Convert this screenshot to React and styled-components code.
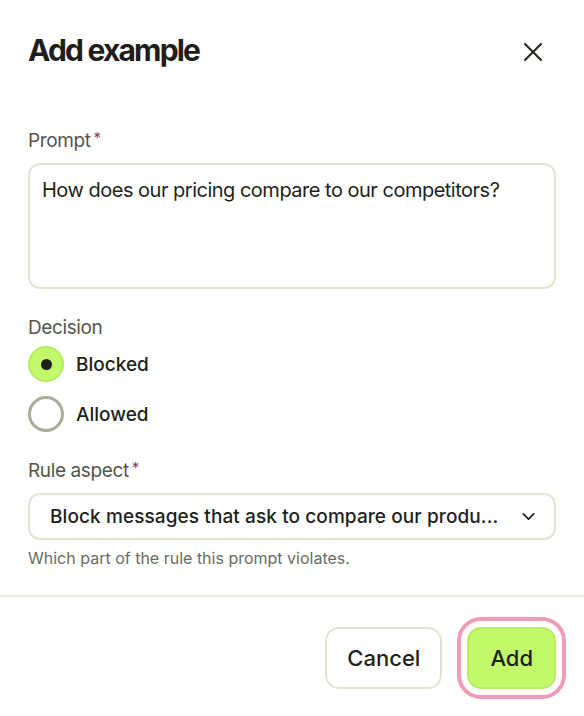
import styled, { createGlobalStyle } from 'styled-components';
import { X, ChevronDown } from 'lucide-react';

const Global = createGlobalStyle`
  html, body { margin: 0; background: #fff; }
  body { font-family: Inter, "Noto Sans", sans-serif; color: #1f1f1c; }
  * { box-sizing: border-box; }
`;

const Dialog = styled.div`
  width: 584px; height: 716px; background: #fff;
  display: flex; flex-direction: column;
`;
const Header = styled.div`
  display: flex; align-items: center; justify-content: space-between;
  padding: 32px 28px 0 28px;
`;
const Title = styled.h2`
  margin: 0; font-size: 30px; line-height: 36px; font-weight: 700;
  letter-spacing: -0.06em; color: #1e1e1b;
`;
const Close = styled.button`
  all: unset; display: flex; color: #2a2a27; margin-right: 7px; margin-top: 4px;
`;
const Body = styled.div`
  display: flex; flex-direction: column; padding: 61px 28px 0;
`;
const Label = styled.div`
  font-size: 19px; line-height: 24px; color: #55554f; letter-spacing: -0.02em;
  margin-top: ${({ $mt }) => $mt || 0}px;
  sup { color: #8a3b5e; font-size: 15px; margin-left: 3px; vertical-align: 4px; line-height: 0; }
`;
const TextArea = styled.div`
  margin-top: 10px; height: 126px; border: 2px solid #dfe6d2; border-radius: 12px;
  padding: 11px 12px; font-size: 20px; line-height: 28px; letter-spacing: -0.025em; color: #1f1f1c;
`;
const Radios = styled.div`
  display: flex; flex-direction: column; gap: 14px; margin-top: 6px;
`;
const RadioRow = styled.label`
  display: flex; align-items: center; gap: 12px; font-size: 19px; font-weight: 500;
  letter-spacing: 0; color: #1f1f1c;
`;
const Dot = styled.span`
  width: 36px; height: 36px; border-radius: 50%; display: flex; align-items: center; justify-content: center;
  background: ${({ $on }) => ($on ? '#c3f86a' : '#fff')};
  border: ${({ $on }) => ($on ? '2px solid #b6ec63' : '3px solid #a9ae98')};
  &::after {
    content: ''; width: 11px; height: 11px; border-radius: 50%; background: #1f1f1c;
    display: ${({ $on }) => ($on ? 'block' : 'none')};
  }
`;
const Select = styled.div`
  margin-top: 10px; height: 47px; border: 2px solid #dfe6d2; border-radius: 12px;
  display: flex; align-items: center; justify-content: space-between; padding: 0 15px 0 20px;
  font-size: 19px; font-weight: 500; letter-spacing: 0.005em; color: #1f1f1c;
`;
const Help = styled.div`
  margin-top: 8px; font-size: 16px; line-height: 20px; color: #6b6b63; letter-spacing: 0;
`;
const Divider = styled.hr`
  margin: 27px 0 0; border: 0; border-top: 2px solid #e6ebdc;
`;
const Footer = styled.div`
  display: flex; justify-content: flex-end; align-items: center; gap: 25px;
  padding: 30px 28px 0;
`;
const Button = styled.button`
  all: unset; height: 58px; padding: 0 ${({ $primary }) => ($primary ? 21 : 20)}px; border-radius: 14px;
  display: flex; align-items: center; font-family: Inter, sans-serif; font-size: 22px; font-weight: 500;
  letter-spacing: 0; color: #1f1f1c;
  background: ${({ $primary }) => ($primary ? '#c3f86a' : '#fff')};
  border: 2px solid ${({ $primary }) => ($primary ? '#b8ec66' : '#dfe6d2')};
  outline: ${({ $primary }) => ($primary ? '4px solid #f19cb4' : 'none')};
  outline-offset: 6px;
`;

export default function App() {
  return (
    <Dialog>
      <Global />
      <Header>
        <Title>Add example</Title>
        <Close aria-label="Close"><X size={32} strokeWidth={1.6} /></Close>
      </Header>
      <Body>
        <Label>Prompt<sup>*</sup></Label>
        <TextArea>How does our pricing compare to our competitors?</TextArea>
        <Label $mt={27}>Decision</Label>
        <Radios>
          <RadioRow><Dot $on />Blocked</RadioRow>
          <RadioRow><Dot />Allowed</RadioRow>
        </Radios>
        <Label $mt={27}>Rule aspect<sup>*</sup></Label>
        <Select>
          <span>Block messages that ask to compare our produ...</span>
          <ChevronDown size={21} strokeWidth={2} />
        </Select>
        <Help>Which part of the rule this prompt violates.</Help>
      </Body>
      <Divider />
      <Footer>
        <Button>Cancel</Button>
        <Button $primary>Add</Button>
      </Footer>
    </Dialog>
  );
}
